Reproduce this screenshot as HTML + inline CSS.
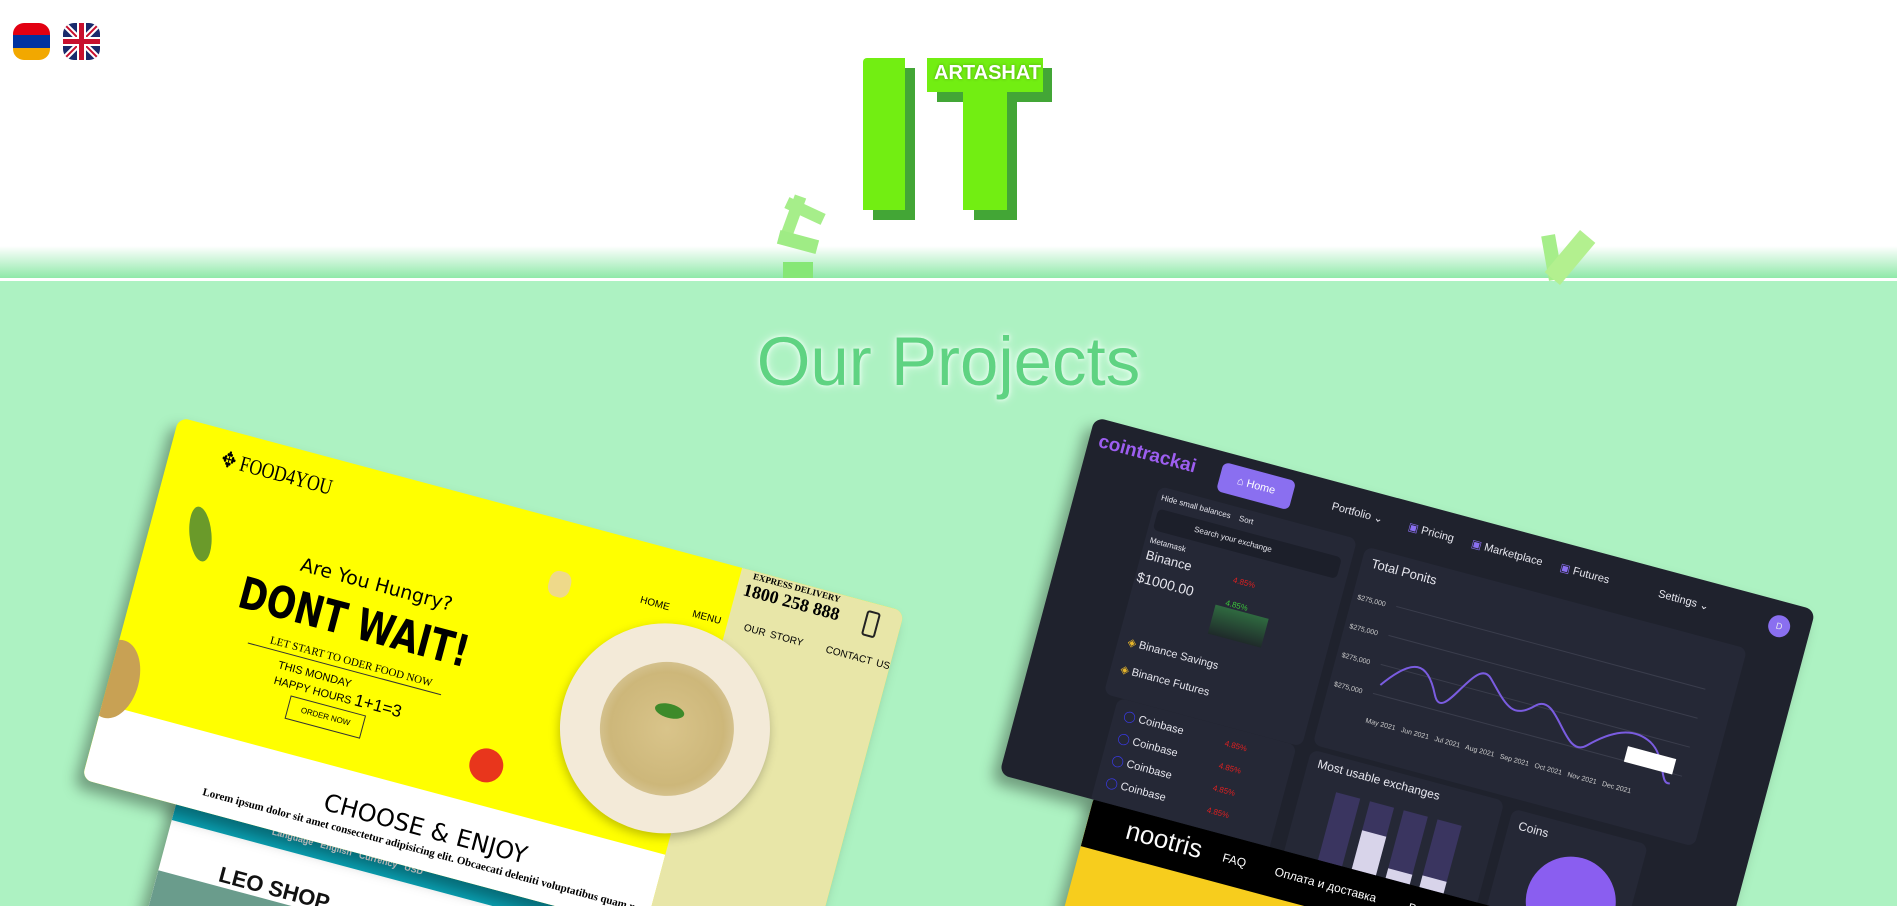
<!DOCTYPE html>
<html><head><meta charset="utf-8">
<style>
*{margin:0;padding:0;box-sizing:border-box}
html,body{width:1897px;height:906px;overflow:hidden;background:#adf2c2;font-family:"Liberation Sans",sans-serif}
#wrap{position:relative;width:1897px;height:906px;overflow:hidden;background:#adf2c2}
.abs{position:absolute}
#top{position:absolute;left:0;top:0;width:1897px;height:278px;background:linear-gradient(to bottom,#fff 0,#fff 246px,#8fe9a9 278px)}
#line{position:absolute;left:0;top:278px;width:1897px;height:3px;background:#fff}
.g{background:#72ee12}
.gs{background:#43a636}
.card{position:absolute;transform-origin:0 0;transform:rotate(15deg);overflow:hidden;border-radius:10px;box-shadow:-6px 10px 14px rgba(0,0,0,.35)}
.t{position:absolute;white-space:nowrap}
</style></head><body><div id="wrap">
<div id="top"></div>
<div id="line"></div>

<div class="abs" style="left:13px;top:23px;width:37px;height:37px;border-radius:11px;overflow:hidden">
 <div style="height:12.3px;background:#e20012"></div><div style="height:12.4px;background:#0033a0"></div><div style="height:12.3px;background:#f2a800"></div>
</div>
<div class="abs" style="left:63px;top:23px;width:37px;height:37px;border-radius:11px;overflow:hidden;background:#1a2a6c">
<svg width="37" height="37" viewBox="0 0 37 37"><path d="M0 0L37 37M37 0L0 37" stroke="#fff" stroke-width="6"/><path d="M0 0L37 37M37 0L0 37" stroke="#c8102e" stroke-width="2"/><path d="M18.5 0V37M0 18.5H37" stroke="#fff" stroke-width="9"/><path d="M18.5 0V37M0 18.5H37" stroke="#c8102e" stroke-width="5"/></svg>
</div>

<div class="abs gs" style="left:873px;top:68px;width:42px;height:152px"></div>
<div class="abs gs" style="left:937px;top:68px;width:115px;height:34px"></div>
<div class="abs gs" style="left:974px;top:92px;width:43px;height:128px"></div>
<div class="abs g" style="left:863px;top:58px;width:42px;height:152px;border-radius:4px 0 0 0"></div>
<div class="abs g" style="left:927px;top:58px;width:116px;height:34px"></div>
<div class="abs g" style="left:963px;top:90px;width:44px;height:120px"></div>
<div class="t" style="left:934px;top:62px;font-size:20px;font-weight:bold;color:#fff;text-shadow:0 0 3px rgba(0,0,0,.3)">ARTASHAT</div>

<div class="abs" style="left:786px;top:195px;width:12px;height:50px;background:#a6ee8a;transform:rotate(20deg)"></div>
<div class="abs" style="left:785px;top:205px;width:40px;height:12px;background:#a6ee8a;transform:rotate(25deg)"></div>
<div class="abs" style="left:778px;top:235px;width:40px;height:14px;background:#9fec85;transform:rotate(15deg)"></div>
<div class="abs" style="left:783px;top:262px;width:30px;height:16px;background:#86e776"></div>
<div class="abs" style="left:1545px;top:235px;width:14px;height:45px;background:#a6ee8a;transform:rotate(-10deg)"></div>
<div class="abs" style="left:1560px;top:230px;width:20px;height:55px;background:#b3f08f;transform:rotate(40deg)"></div>

<div class="t" style="left:0;width:1897px;text-align:center;top:322px;font-size:69px;color:#5fd382;text-shadow:0 0 10px #e6fff0,0 0 4px #fff">Our Projects</div>

<div class="card" style="left:179px;top:793px;width:750px;height:380px;background:#fff">
 <div class="abs" style="left:0;top:0;width:750px;height:28px;background:#0aa3b5"></div>
 <div class="t" style="left:100px;top:8px;font-size:9px;color:#fff;font-weight:bold">Language &nbsp; English &nbsp; Currency &nbsp; USD</div>
 <div class="t" style="left:60px;top:55px;font-size:22px;font-weight:bold;color:#111">LEO SHOP</div>
 <div class="t" style="left:170px;top:82px;font-size:10px;font-weight:bold;color:#111">HOME &nbsp; WOMEN &nbsp; MEN</div>
 <div class="abs" style="left:0;top:80px;width:170px;height:200px;background:#6a9c8c"></div>
</div>
<div class="card" style="left:1095px;top:793px;width:750px;height:380px;background:#f7cd1d">
 <div class="abs" style="left:0;top:0;width:750px;height:55px;background:#000"></div>
 <div class="t" style="left:40px;top:12px;font-size:26px;color:#fff">nootris</div>
 <div class="t" style="left:140px;top:22px;font-size:12px;color:#fff">FAQ &nbsp;&nbsp;&nbsp;&nbsp;&nbsp;&nbsp;&nbsp; Оплата и доставка &nbsp;&nbsp;&nbsp;&nbsp;&nbsp;&nbsp;&nbsp;&nbsp; Возврат</div>
</div>

<div class="card" style="left:179px;top:417px;width:751px;height:375px;background:#ffff00">
 <div class="abs" style="left:0;top:297px;width:583px;height:100px;background:#fff"></div>
 <div class="abs" style="left:583px;top:0;width:170px;height:375px;background:#e8e6a8"></div>
 <div class="t" style="left:52px;top:16px;font-size:22px;font-family:'Liberation Serif',serif;transform:scaleX(.8);transform-origin:0 0">✥ FOOD4YOU</div>
 <div class="abs" style="left:40px;top:80px;width:22px;height:55px;border-radius:50%;background:#6a9a2a;transform:rotate(-20deg)"></div>
 <div class="t" style="left:156px;top:100px;font-size:19px;font-family:'DejaVu Sans',sans-serif">Are You Hungry?</div>
 <div class="t" style="left:104px;top:128px;font-size:44px;font-weight:bold;font-family:'DejaVu Sans',sans-serif;transform:scaleX(.78);transform-origin:0 0">DONT WAIT!</div>
 <div class="t" style="left:146px;top:186px;font-size:11px;font-family:'Liberation Serif',serif">LET START TO ODER FOOD NOW</div>
 <div class="abs" style="left:125px;top:200px;width:200px;height:1px;background:#333"></div>
 <div class="t" style="left:160px;top:208px;font-size:11px;line-height:13px">THIS MONDAY<br>HAPPY HOURS <span style="font-size:17px">1+1=3</span></div>
 <div class="abs" style="left:180px;top:240px;width:78px;height:24px;border:1px solid #333;font-size:8px;text-align:center;line-height:22px">ORDER NOW</div>
 <div class="abs" style="left:400px;top:50px;width:22px;height:26px;background:#eed98a;border-radius:40%"></div>
 <div class="t" style="left:493px;top:52px;font-size:10px;word-spacing:2px">HOME &nbsp;&nbsp;&nbsp; MENU &nbsp;&nbsp;&nbsp; OUR STORY &nbsp;&nbsp;&nbsp; CONTACT US</div>
 <div class="t" style="left:596px;top:0px;font-size:9px;font-family:'Liberation Serif',serif;font-weight:bold">EXPRESS DELIVERY</div>
 <div class="t" style="left:590px;top:10px;font-size:18px;font-family:'Liberation Serif',serif;font-weight:bold">1800 258 888</div>
 <div class="abs" style="left:715px;top:8px;width:14px;height:26px;border:2px solid #222;border-radius:3px"></div>
 <div class="abs" style="left:445px;top:70px;width:210px;height:210px;border-radius:50%;background:#f3ead8;box-shadow:0 4px 10px rgba(0,0,0,.25)"></div>
 <div class="abs" style="left:485px;top:108px;width:134px;height:134px;border-radius:50%;background:radial-gradient(circle,#d9c48a,#cdb77a 60%,#e6dcc0)"></div>
 <div class="abs" style="left:535px;top:150px;width:30px;height:14px;border-radius:50%;background:#3d8a2a"></div>
 <div class="abs" style="left:370px;top:240px;width:34px;height:34px;border-radius:50%;background:#e8361c"></div>
 <div class="abs" style="left:-20px;top:230px;width:50px;height:80px;border-radius:50%;background:#c8a154"></div>
 <div class="t" style="left:240px;top:320px;font-size:24px;font-family:'DejaVu Sans',sans-serif">CHOOSE &amp; ENJOY</div>
 <div class="t" style="left:120px;top:350px;font-size:11px;font-family:'Liberation Serif',serif;font-weight:bold">Lorem ipsum dolor sit amet consectetur adipisicing elit. Obcaecati deleniti voluptatibus quam porro</div>
</div>

<div class="card" style="left:1095px;top:417px;width:746px;height:370px;background:#1f222d;color:#e6e6ee">
 <div class="t" style="left:10px;top:12px;font-size:19px;color:#9d5ef0;font-weight:bold">cointrackai</div>
 <div class="abs" style="left:136px;top:10px;width:75px;height:30px;border-radius:6px;background:#8a6ff0;font-size:11px;color:#fff;text-align:center;line-height:30px">⌂ Home</div>
 <div class="t" style="left:252px;top:18px;font-size:11px">Portfolio ⌄</div>
 <div class="t" style="left:331px;top:18px;font-size:11px"><span style="color:#8a6ff0">▣</span> Pricing &nbsp;&nbsp;&nbsp;&nbsp; <span style="color:#8a6ff0">▣</span> Marketplace &nbsp;&nbsp;&nbsp;&nbsp; <span style="color:#8a6ff0">▣</span> Futures</div>
 <div class="t" style="left:590px;top:18px;font-size:11px">Settings ⌄</div>
 <div class="abs" style="left:704px;top:14px;width:22px;height:22px;border-radius:50%;background:#8a6ff0;font-size:9px;text-align:center;line-height:22px">D</div>
 <div class="abs" style="left:80px;top:50px;width:205px;height:215px;border-radius:8px;background:#252836"></div>
 <div class="t" style="left:85px;top:56px;font-size:8px">Hide small balances &nbsp;&nbsp; Sort</div>
 <div class="abs" style="left:85px;top:72px;width:190px;height:22px;border-radius:5px;background:#1c1f2a;font-size:8px;line-height:22px;padding-left:40px">Search your exchange</div>
 <div class="t" style="left:85px;top:100px;font-size:8px">Metamask</div>
 <div class="t" style="left:85px;top:112px;font-size:13px">Binance <span style="color:#e02020;font-size:8px;margin-left:40px">4.85%</span></div>
 <div class="t" style="left:82px;top:135px;font-size:14px">$1000.00 <span style="color:#3ac93a;font-size:8px;margin-left:30px">4.85%</span></div>
 <div class="abs" style="left:165px;top:150px;width:55px;height:30px;background:linear-gradient(#2f6a40,#1f2a2a)"></div>
 <div class="t" style="left:90px;top:195px;font-size:11px;line-height:28px"><span style="color:#e8b62a">◈</span> Binance Savings<br><span style="color:#e8b62a">◈</span> Binance Futures</div>
 <div class="abs" style="left:295px;top:55px;width:395px;height:205px;border-radius:8px;background:#252836"></div>
 <div class="t" style="left:305px;top:62px;font-size:13px">Total Ponits</div>
 <svg class="abs" style="left:300px;top:90px" width="380" height="160"><g stroke="#3a3d4c"><line x1="40" y1="15" x2="360" y2="15"/><line x1="40" y1="45" x2="360" y2="45"/><line x1="40" y1="75" x2="360" y2="75"/><line x1="40" y1="105" x2="360" y2="105"/></g><path d="M45 95C70 60 85 60 100 90S130 40 150 60S180 95 200 75S240 120 260 100S300 70 320 80S340 120 350 115" fill="none" stroke="#7a5ce0" stroke-width="2"/><g fill="#ccc" font-size="7" font-family="Liberation Sans"><text x="0" y="18">$275,000</text><text x="0" y="48">$275,000</text><text x="0" y="78">$275,000</text><text x="0" y="108">$275,000</text><text x="40" y="135">May 2021 &#160; Jun 2021 &#160; Jul 2021 &#160; Aug 2021 &#160; Sep 2021 &#160; Oct 2021 &#160; Nov 2021 &#160; Dec 2021</text></g><rect x="300" y="90" width="50" height="16" fill="#fff"/></svg>
 <div class="abs" style="left:95px;top:265px;width:185px;height:120px;border-radius:8px;background:#252836"></div>
 <div class="t" style="left:105px;top:270px;font-size:11px;line-height:22px"><span style="color:#3a3ae8">◯</span> Coinbase <span style="color:#e02020;font-size:8px;margin-left:40px">4.85%</span><br><span style="color:#3a3ae8">◯</span> Coinbase <span style="color:#e02020;font-size:8px;margin-left:40px">4.85%</span><br><span style="color:#3a3ae8">◯</span> Coinbase <span style="color:#e02020;font-size:8px;margin-left:40px">4.85%</span><br><span style="color:#3a3ae8">◯</span> Coinbase <span style="color:#e02020;font-size:8px;margin-left:40px">4.85%</span></div>
 <div class="abs" style="left:295px;top:265px;width:200px;height:120px;border-radius:8px;background:#252836"></div>
 <div class="t" style="left:305px;top:270px;font-size:12px">Most usable exchanges</div>
 <div class="abs" style="left:330px;top:300px;width:25px;height:80px;background:#3a3560"></div>
 <div class="abs" style="left:365px;top:300px;width:25px;height:80px;background:#3a3560"><div style="margin-top:30px;height:50px;background:#d8d4ea"></div></div>
 <div class="abs" style="left:400px;top:300px;width:25px;height:80px;background:#3a3560"><div style="margin-top:60px;height:20px;background:#d8d4ea"></div></div>
 <div class="abs" style="left:435px;top:300px;width:25px;height:80px;background:#3a3560"><div style="margin-top:58px;height:22px;background:#d8d4ea"></div></div>
 <div class="abs" style="left:505px;top:270px;width:140px;height:120px;border-radius:8px;background:#252836"></div>
 <div class="t" style="left:515px;top:278px;font-size:12px">Coins</div>
 <div class="abs" style="left:540px;top:300px;width:90px;height:90px;border-radius:50%;background:#8a5ef0"></div>
</div>
</div></body></html>
